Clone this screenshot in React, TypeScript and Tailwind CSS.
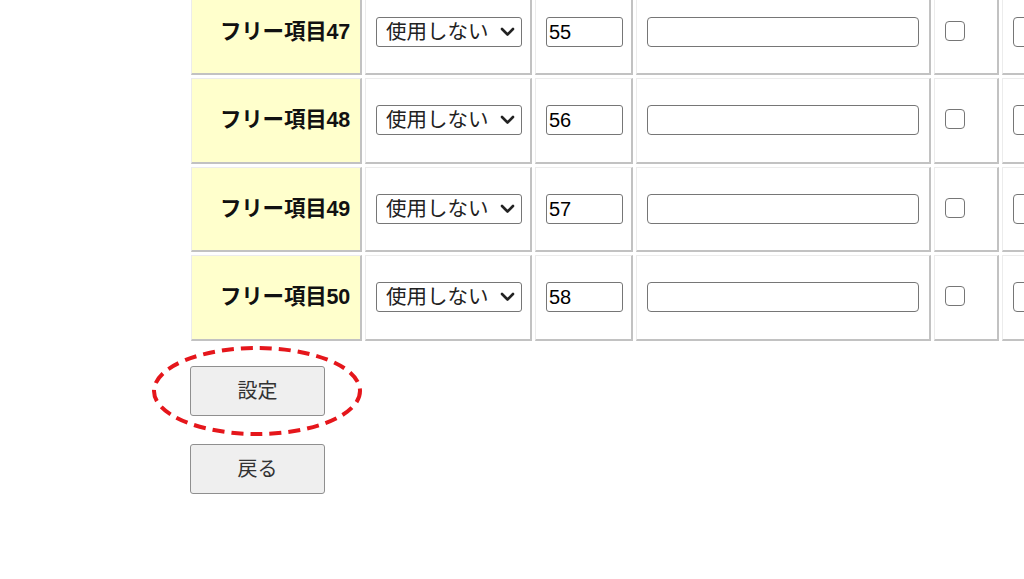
import React from "react";

const rows = [
  { label: "フリー項目47", num: "55" },
  { label: "フリー項目48", num: "56" },
  { label: "フリー項目49", num: "57" },
  { label: "フリー項目50", num: "58" },
];

const cell =
  "h-[85.5px] shrink-0 flex items-center border-t border-l border-t-[#ececec] border-l-[#ececec] border-r-2 border-b-2 border-r-[#c2c2c2] border-b-[#c2c2c2]";

function Row({ label, num }: { label: string; num: string }) {
  return (
    <div className="flex gap-[3px]">
      <div className={`${cell} w-[171px] bg-[#ffffcc] justify-end pr-[10px]`}>
        <span className="text-[21.5px] font-bold text-[#111] tracking-[-0.2px]">{label}</span>
      </div>
      <div className={`${cell} w-[167px] bg-white pl-[10px]`}>
        <div className="relative w-[146px] h-[30px]">
          <select
            defaultValue="0"
            className="appearance-none w-full h-full border border-[#767676] rounded-[3px] bg-white pl-[9px] text-[20.5px] leading-none text-[#222] outline-none"
          >
            <option value="0">使用しない</option>
          </select>
          <svg
            className="absolute right-[7px] top-[10px] pointer-events-none"
            width="15"
            height="10"
            viewBox="0 0 15 10"
          >
            <path d="M2 2 L7.5 7.5 L13 2" fill="none" stroke="#222" strokeWidth="2.6" strokeLinecap="round" strokeLinejoin="round" />
          </svg>
        </div>
      </div>
      <div className={`${cell} w-[98px] bg-white pl-[10px]`}>
        <input
          defaultValue={num}
          className="w-[77px] h-[30px] border border-[#767676] rounded-[3px] bg-white pl-[2px] text-[20px] text-black outline-none"
        />
      </div>
      <div className={`${cell} w-[295px] bg-white pl-[10px]`}>
        <input className="w-[272px] h-[30px] border border-[#767676] rounded-[4px] bg-white outline-none" />
      </div>
      <div className={`${cell} w-[65px] bg-white pl-[10px] pb-[2px]`}>
        <input
          type="checkbox"
          className="appearance-none w-[20px] h-[20px] border-[1.5px] border-[#767676] rounded-[4px] bg-white"
        />
      </div>
      <div className={`${cell} w-[200px] bg-white pl-[10px]`}>
        <input className="w-[150px] h-[30px] border border-[#767676] rounded-[4px] bg-white outline-none" />
      </div>
    </div>
  );
}

export default function App() {
  return (
    <div
      className="relative w-[1024px] h-[579px] overflow-hidden bg-white"
      style={{ fontFamily: '"Liberation Sans", "Noto Sans CJK JP", sans-serif' }}
    >
      <div className="flex flex-col gap-[3px] pl-[191px] mt-[-10.5px]">
        {rows.map((r) => (
          <Row key={r.label} label={r.label} num={r.num} />
        ))}
      </div>
      <div className="flex flex-col gap-[28px] pl-[190px] mt-[25px]">
        <button className="w-[135px] h-[50px] bg-[#efefef] border border-[#8f8f8f] rounded-[3px] text-[20px] text-[#333]">
          設定
        </button>
        <button className="w-[135px] h-[50px] bg-[#efefef] border border-[#8f8f8f] rounded-[3px] text-[20px] text-[#333]">
          戻る
        </button>
      </div>
      <svg
        className="absolute left-[151px] top-[345px] pointer-events-none"
        width="212"
        height="92"
        viewBox="0 0 212 92"
      >
        <ellipse cx="106" cy="46" rx="103" ry="43" fill="none" stroke="#e5161b" strokeWidth="4" strokeDasharray="12 7" />
      </svg>
    </div>
  );
}
